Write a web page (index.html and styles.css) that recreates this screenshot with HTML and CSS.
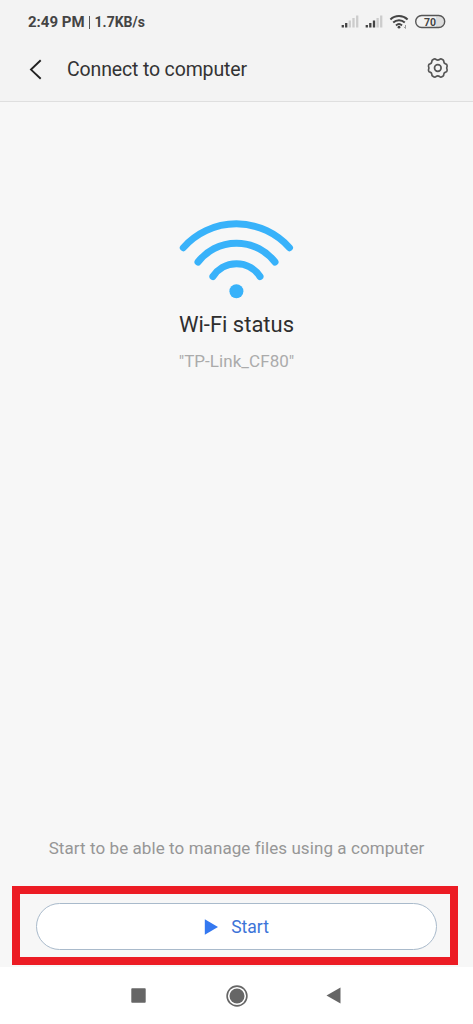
FILE: index.html
```html
<!DOCTYPE html>
<html lang="en">
<head>
<meta charset="utf-8">
<meta name="viewport" content="width=device-width, initial-scale=1">
<title>Connect to computer</title>
<link rel="stylesheet" href="styles.css">
</head>
<body>
<div class="screen">
  <header class="top">
    <div class="status-bar">
      <div class="status-text"><span class="clock">2:49 PM</span><span class="divider"></span><span class="speed">1.7KB/s</span></div>
      <svg class="status-icons" width="106" height="18" viewBox="340 12 106 18" fill="none">
        <g stroke-width="2.300">
          <path stroke="#444" d="M342.800 27.500v-2.500M346.200 27.500v-4.500"/>
          <path stroke="#ccc" d="M349.800 27.500v-7M353.500 27.500v-9.500M357.200 27.500v-12"/>
          <path stroke="#444" d="M366.800 27.500v-2.500M370.300 27.500v-4.500M374 27.500v-7"/>
          <path stroke="#ccc" d="M377.600 27.500v-9.500M381.200 27.500v-12"/>
        </g>
        <g stroke="#444" stroke-width="2">
          <path d="M390.400 19.400a12.600 12.600 0 0 1 17.200 0"/>
          <path d="M393.200 22.600a8.500 8.500 0 0 1 11.600 0"/>
          <path d="M396 25.400a4.500 4.500 0 0 1 6 0"/>
        </g>
        <circle cx="399" cy="27.200" r="1.400" fill="#444"/>
        <path stroke="#999" d="M405.500 25v3.400M404 26.800l1.500 1.700"/>
        <path fill="#ddd" d="M436 16.500h3a5 5 0 0 1 0 10.500h-3z"/>
        <rect x="415.700" y="15.500" width="29" height="12" rx="6" stroke="#555" stroke-width="1.400"/>
        <text class="battery" x="430" y="25.500" text-anchor="middle">70</text>
      </svg>
    </div>
    <div class="title-bar">
      <svg class="back" width="14" height="22" viewBox="29 57 14 22" fill="none" stroke="#222" stroke-width="1.900"><path d="M40.700 59.300L31 68.600l9.700 9.200"/></svg>
      <h1 class="title">Connect to computer</h1>
      <svg class="gear" width="22" height="22" viewBox="-.1 0 22.600 22" fill="none" stroke="#555" stroke-width="1.700" stroke-linejoin="round">
        <path d="M7.200 1.700Q8.400 1.400 9.200 2.300Q11 3.600 12.800 2.300Q13.600 1.400 14.800 1.700L16.500 2.700Q17.200 3.300 17.100 4.500Q17.300 6.300 19 6.800Q20.400 7 20.500 8.200V9.600Q19.700 11 20.500 12.400V13.800Q20.400 15 19 15.200Q17.300 15.700 17.100 17.500Q17.200 18.700 16.500 19.300L14.800 20.300Q13.600 20.600 12.800 19.700Q11 18.400 9.200 19.700Q8.400 20.600 7.200 20.300L5.500 19.300Q4.800 18.700 4.900 17.500Q4.700 15.700 3 15.200Q1.600 15 1.500 13.800V12.400Q2.300 11 1.500 9.600V8.200Q1.600 7 3 6.800Q4.700 6.300 4.900 4.500Q4.800 3.300 5.500 2.700Z"/>
        <circle cx="11" cy="11" r="3.400"/>
      </svg>
    </div>
  </header>
  <main class="content">
    <svg class="wifi" width="116" height="80" viewBox="178 219 116 80" fill="none" stroke="#38b2fa" stroke-width="7" stroke-linecap="round">
      <path d="M183.300 247.700A71 71 0 0 1 289.500 247.700"/>
      <path d="M198 262A48.800 48.800 0 0 1 275 262"/>
      <path d="M212.900 276.500A28 28 0 0 1 260 276.500"/>
      <circle cx="236.400" cy="291.300" r="7" fill="#38b2fa" stroke="none"/>
    </svg>
    <h2 class="wifi-title">Wi-Fi status</h2>
    <p class="network">"TP-Link_CF80"</p>
    <p class="hint">Start to be able to manage files using a computer</p>
    <div class="highlight">
      <button class="start" type="button">
        <svg width="14" height="16" viewBox="0 0 14 16"><path fill="#3478f0" d="M.8.300L14 8 .8 15.700z"/></svg>
        <span>Start</span>
      </button>
    </div>
  </main>
  <nav class="nav">
    <svg width="15" height="15" viewBox="0 0 15 15"><rect x=".3" y=".3" width="14.400" height="14.400" rx=".8" fill="#666"/></svg>
    <svg width="22" height="22" viewBox="0 0 22 22"><circle cx="11" cy="11" r="9.900" fill="none" stroke="#666" stroke-width="1.600"/><circle cx="11" cy="11" r="7.500" fill="#666"/></svg>
    <svg class="nav-back" width="15" height="17" viewBox="0 0 15 17"><path fill="#666" d="M14.500.5v16L.5 8.500z"/></svg>
  </nav>
</div>
</body>
</html>
```
FILE: styles.css
```css
* { box-sizing: border-box; }
body { margin: 0; font-family: Roboto, "Liberation Sans", sans-serif; background: #f7f7f7; }
h1, h2, p { margin: 0; font-weight: 400; white-space: nowrap; }
svg { display: block; flex: none; }
.screen { width: 473px; height: 1024px; display: flex; flex-direction: column; overflow: hidden; }
.top { height: 102px; background: #f3f3f3; border-bottom: 1px solid #dfdfdf; }
.status-bar { height: 42px; padding: 12px 27px 0 28px; display: flex; justify-content: space-between; }
.status-text { display: flex; align-items: center; height: 20px; color: #444; font-weight: 700; font-size: 15px; }
.divider { width: 1px; height: 13px; margin: 0 5px 0 4px; background: #555; }
.speed { font-size: 14px; }
.battery { font: 700 10.5px Roboto, sans-serif; fill: #444; }
.title-bar { height: 54px; display: flex; align-items: center; padding: 0 24px 0 29px; }
.title { margin: 2px 0 0 24px; flex: 1; font-size: 19.5px; letter-spacing: -0.15px; line-height: 26px; color: #333; }
.gear { margin-top: -2px; }
.content { height: 865px; display: flex; flex-direction: column; align-items: center; padding-top: 117px; }
.wifi { margin-right: 2px; }
.wifi-title { margin-top: 11px; font-size: 22px; line-height: 30px; color: #2e2e2e; }
.network { margin-top: 10px; font-size: 17px; letter-spacing: 0.05px; line-height: 22px; color: #ababab; }
.hint { margin-top: auto; font-size: 17px; letter-spacing: 0.08px; line-height: 24px; color: #969696; }
.highlight { width: 446px; height: 79px; margin: 26px 15px 2px 12px; align-self: flex-start; padding: 9px 13px 0 16px; border: 8px solid #ec1c24; flex: none; }
.start { width: 401px; height: 47px; padding: 0; border: 1px solid #a9bacb; border-radius: 24px; background: #fff; color: #3c74d8; font: 400 17.5px Roboto, sans-serif; display: flex; align-items: center; justify-content: center; gap: 13px; }
.nav { height: 57px; background: #fff; display: grid; grid-template-columns: 98px 98px 98px; justify-content: center; justify-items: center; align-items: center; }
.nav-back { margin-right: 3px; }
```
